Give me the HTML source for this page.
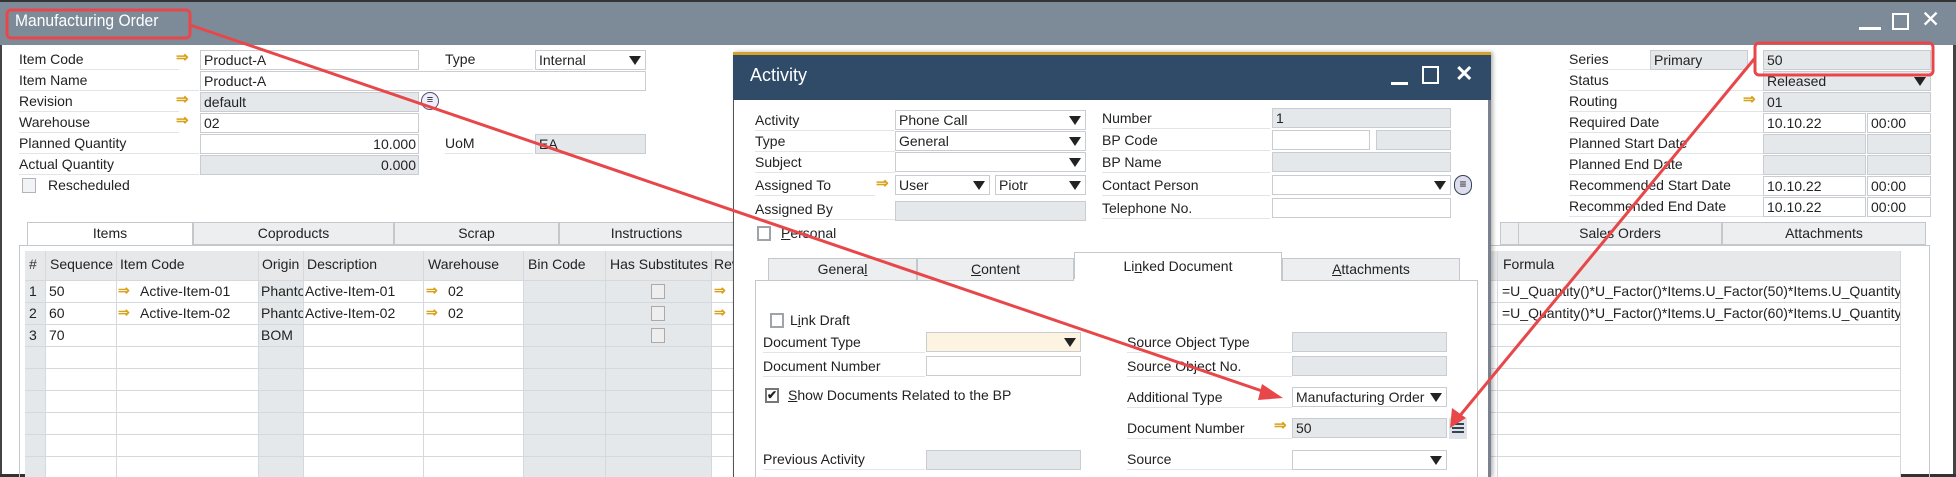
<!DOCTYPE html>
<html><head><meta charset="utf-8"><style>
*{box-sizing:border-box;margin:0;padding:0}
body{width:1956px;height:477px;overflow:hidden;background:#fff;position:relative;font-family:"Liberation Sans Narrow","Liberation Sans",sans-serif;font-size:14px;color:#222}
.a{position:absolute;white-space:nowrap}
.l{position:absolute;white-space:nowrap;line-height:20px;border-bottom:1px solid #e2e4e6;height:21px}
.f{position:absolute;height:20px;border:1px solid #c9cdd1;background:#fff;line-height:18px;padding-left:3px;white-space:nowrap;overflow:hidden}
.g{background:#e5e8eb}
.dd:after{content:"";position:absolute;right:4px;top:5px;border-left:6px solid transparent;border-right:6px solid transparent;border-top:9px solid #222}
.ar{position:absolute;color:#d9a21b;font-size:15px;font-weight:bold;line-height:20px}
.r{font-family:"Liberation Sans",sans-serif;font-size:14px}
.tab{position:absolute;height:23px;border:1px solid #c4c8cc;background:#eceef0;text-align:center;line-height:21px}
.cb{position:absolute;width:14px;height:15px;border:2px solid #a0a4a8;background:#fff}
.gl{position:absolute;height:1px;background:#d6d9dc}
.gv{position:absolute;width:1px;background:#d6d9dc}
</style></head><body>
<div class="a" style="left:0;top:0;width:1956px;height:45px;background:#7d8b99;border-top:2px solid #333"></div>
<div class="a" style="left:15px;top:11px;font-size:17px;color:#fff;transform:scaleX(0.92);transform-origin:left">Manufacturing Order</div>
<div class="a" style="left:1859px;top:27px;width:22px;height:3px;background:#fff"></div>
<div class="a" style="left:1892px;top:13px;width:17px;height:17px;border:2.5px solid #fff"></div>
<div class="a" style="left:1921px;top:6px;color:#fff;font-size:23px;font-family:'Liberation Sans',sans-serif">✕</div>
<div class="a" style="left:0;top:45px;width:2px;height:432px;background:#444"></div>
<div class="a" style="left:1953px;top:45px;width:3px;height:432px;background:#444"></div>
<div class="a" style="left:0;top:474px;width:1956px;height:3px;background:#333"></div>

<div class="l" style="left:19px;top:49px;width:160px">Item Code</div>
<div class="ar" style="left:176px;top:48px">⇒</div>
<div class="f" style="left:200px;top:50px;width:219px">Product-A</div>
<div class="l" style="left:445px;top:49px;width:88px">Type</div>
<div class="f dd" style="left:535px;top:50px;width:111px">Internal</div>
<div class="l" style="left:19px;top:70px;width:180px">Item Name</div>
<div class="f" style="left:200px;top:71px;width:446px">Product-A</div>
<div class="l" style="left:19px;top:91px;width:160px">Revision</div>
<div class="ar" style="left:176px;top:90px">⇒</div>
<div class="f g" style="left:200px;top:92px;width:219px">default</div>
<div class="a" style="left:421px;top:92px;width:18px;height:18px;border-radius:9px;border:1.5px solid #556;background:#eef;font-size:11px;text-align:center;line-height:15px">≡</div>
<div class="l" style="left:19px;top:112px;width:160px">Warehouse</div>
<div class="ar" style="left:176px;top:111px">⇒</div>
<div class="f" style="left:200px;top:113px;width:219px">02</div>
<div class="l" style="left:19px;top:133px;width:180px">Planned Quantity</div>
<div class="f" style="left:200px;top:134px;width:219px;text-align:right;padding-right:2px">10.000</div>
<div class="l" style="left:445px;top:133px;width:88px">UoM</div>
<div class="f g" style="left:535px;top:134px;width:111px">EA</div>
<div class="l" style="left:19px;top:154px;width:180px">Actual Quantity</div>
<div class="f g" style="left:200px;top:155px;width:219px;text-align:right;padding-right:2px">0.000</div>
<div class="cb" style="left:22px;top:178px;border-width:1px;border-color:#b0b4b8;background:#f2f3f4"></div>
<div class="a" style="left:48px;top:177px">Rescheduled</div>

<div class="tab" style="left:27px;top:222px;width:166px;background:#fff;border-bottom-color:#fff;height:24px">Items</div>
<div class="tab" style="left:193px;top:222px;width:201px">Coproducts</div>
<div class="tab" style="left:394px;top:222px;width:165px">Scrap</div>
<div class="tab" style="left:559px;top:222px;width:175px">Instructions</div>
<div class="tab r" style="left:1500px;top:222px;width:40px"></div>
<div class="tab r" style="left:1518px;top:222px;width:204px">Sales Orders</div>
<div class="tab r" style="left:1722px;top:222px;width:204px">Attachments</div>
<div class="a" style="left:19px;top:245px;width:1911px;height:232px;border:1px solid #c4c8cc;border-bottom:none"></div>

<div class="a" style="left:25px;top:251px;width:1875px;height:226px;background:#fff;border-left:1px solid #d6d9dc"></div>
<div class="a g" style="left:25px;top:251px;width:1875px;height:29px;background:#e6e8ea"></div>
<div class="a g" style="left:25px;top:280px;width:20px;height:197px"></div>
<div class="a g" style="left:258px;top:280px;width:45px;height:197px"></div>
<div class="a g" style="left:523px;top:280px;width:188px;height:197px"></div>
<div class="gv" style="left:45px;top:251px;height:226px"></div>
<div class="gv" style="left:116px;top:251px;height:226px"></div>
<div class="gv" style="left:258px;top:251px;height:226px"></div>
<div class="gv" style="left:303px;top:251px;height:226px"></div>
<div class="gv" style="left:423px;top:251px;height:226px"></div>
<div class="gv" style="left:523px;top:251px;height:226px"></div>
<div class="gv" style="left:605px;top:251px;height:226px"></div>
<div class="gv" style="left:711px;top:251px;height:226px"></div>
<div class="gv" style="left:1497px;top:251px;height:226px"></div>
<div class="gv" style="left:1900px;top:251px;height:226px"></div>
<div class="gl" style="left:25px;top:280px;width:1875px"></div>
<div class="gl" style="left:25px;top:302px;width:1875px"></div>
<div class="gl" style="left:25px;top:324px;width:1875px"></div>
<div class="gl" style="left:25px;top:346px;width:1875px"></div>
<div class="gl" style="left:25px;top:368px;width:1875px"></div>
<div class="gl" style="left:25px;top:390px;width:1875px"></div>
<div class="gl" style="left:25px;top:412px;width:1875px"></div>
<div class="gl" style="left:25px;top:434px;width:1875px"></div>
<div class="gl" style="left:25px;top:456px;width:1875px"></div>
<div class="a" style="left:29px;top:256px;color:#333">#</div>
<div class="a" style="left:50px;top:256px">Sequence</div>
<div class="a" style="left:120px;top:256px">Item Code</div>
<div class="a" style="left:262px;top:256px">Origin</div>
<div class="a" style="left:307px;top:256px">Description</div>
<div class="a" style="left:428px;top:256px">Warehouse</div>
<div class="a" style="left:528px;top:256px">Bin Code</div>
<div class="a" style="left:610px;top:256px">Has Substitutes</div>
<div class="a" style="left:714px;top:256px">Rev</div>
<div class="a r" style="left:1503px;top:256px">Formula</div>
<div class="a" style="left:29px;top:283px">1</div><div class="a" style="left:49px;top:283px">50</div>
<div class="a" style="left:118px;top:282px;color:#d9a21b;font-weight:bold">⇒</div><div class="a" style="left:140px;top:283px">Active-Item-01</div>
<div class="a" style="left:261px;top:283px;width:42px;overflow:hidden">Phantom</div><div class="a" style="left:305px;top:283px">Active-Item-01</div>
<div class="a" style="left:426px;top:282px;color:#d9a21b;font-weight:bold">⇒</div><div class="a" style="left:448px;top:283px">02</div>
<div class="cb" style="left:651px;top:284px;border-width:1px;border-color:#aaa;background:#eee"></div>
<div class="a" style="left:714px;top:282px;color:#d9a21b;font-weight:bold">⇒</div>
<div class="a" style="left:29px;top:305px">2</div><div class="a" style="left:49px;top:305px">60</div>
<div class="a" style="left:118px;top:304px;color:#d9a21b;font-weight:bold">⇒</div><div class="a" style="left:140px;top:305px">Active-Item-02</div>
<div class="a" style="left:261px;top:305px;width:42px;overflow:hidden">Phantom</div><div class="a" style="left:305px;top:305px">Active-Item-02</div>
<div class="a" style="left:426px;top:304px;color:#d9a21b;font-weight:bold">⇒</div><div class="a" style="left:448px;top:305px">02</div>
<div class="cb" style="left:651px;top:306px;border-width:1px;border-color:#aaa;background:#eee"></div>
<div class="a" style="left:714px;top:304px;color:#d9a21b;font-weight:bold">⇒</div>
<div class="a" style="left:29px;top:327px">3</div><div class="a" style="left:49px;top:327px">70</div>
<div class="a" style="left:261px;top:327px">BOM</div>
<div class="cb" style="left:651px;top:328px;border-width:1px;border-color:#aaa;background:#eee"></div>
<div class="a r" style="left:1502px;top:283px;width:398px;overflow:hidden">=U_Quantity()*U_Factor()*Items.U_Factor(50)*Items.U_Quantity</div>
<div class="a r" style="left:1502px;top:305px;width:398px;overflow:hidden">=U_Quantity()*U_Factor()*Items.U_Factor(60)*Items.U_Quantity</div>

<div class="l r" style="left:1569px;top:49px;width:178px">Series</div>
<div class="f r g" style="left:1650px;top:50px;width:98px">Primary</div>
<div class="f r g" style="left:1763px;top:50px;width:168px">50</div>
<div class="l r" style="left:1569px;top:70px;width:194px">Status</div>
<div class="f r g dd" style="left:1763px;top:71px;width:168px">Released</div>
<div class="l r" style="left:1569px;top:91px;width:194px">Routing</div>
<div class="ar" style="left:1743px;top:90px">⇒</div>
<div class="f r g" style="left:1763px;top:92px;width:168px">01</div>
<div class="l r" style="left:1569px;top:112px;width:194px">Required Date</div>
<div class="f r" style="left:1763px;top:113px;width:103px">10.10.22</div><div class="f r" style="left:1867px;top:113px;width:64px">00:00</div>
<div class="l r" style="left:1569px;top:133px;width:194px">Planned Start Date</div>
<div class="f g" style="left:1763px;top:134px;width:103px"></div><div class="f g" style="left:1867px;top:134px;width:64px"></div>
<div class="l r" style="left:1569px;top:154px;width:194px">Planned End Date</div>
<div class="f g" style="left:1763px;top:155px;width:103px"></div><div class="f g" style="left:1867px;top:155px;width:64px"></div>
<div class="l r" style="left:1569px;top:175px;width:194px">Recommended Start Date</div>
<div class="f r" style="left:1763px;top:176px;width:103px">10.10.22</div><div class="f r" style="left:1867px;top:176px;width:64px">00:00</div>
<div class="l r" style="left:1569px;top:196px;width:194px">Recommended End Date</div>
<div class="f r" style="left:1763px;top:197px;width:103px">10.10.22</div><div class="f r" style="left:1867px;top:197px;width:64px">00:00</div>

<div class="a" style="left:733px;top:52px;width:758px;height:425px;background:#fff;border-left:1px solid #555;border-right:3px solid #7a8290;box-shadow:2px 0 4px rgba(0,0,0,.3)"></div>
<div class="a" style="left:733px;top:52px;width:758px;height:48px;background:#2f4b68;border-top:3px solid #d4a22a"></div>
<div class="a" style="left:750px;top:65px;font-size:18px;color:#fff">Activity</div>
<div class="a" style="left:1391px;top:82px;width:17px;height:3px;background:#fff"></div>
<div class="a" style="left:1422px;top:66px;width:17px;height:18px;border:2.5px solid #fff"></div>
<div class="a" style="left:1455px;top:61px;color:#fff;font-size:22px;font-weight:bold;font-family:'Liberation Sans',sans-serif">✕</div>

<div class="l" style="left:755px;top:110px;width:140px">Activity</div>
<div class="f dd" style="left:895px;top:110px;width:191px">Phone Call</div>
<div class="l" style="left:755px;top:131px;width:140px">Type</div>
<div class="f dd" style="left:895px;top:131px;width:191px">General</div>
<div class="l" style="left:755px;top:152px;width:140px">Subject</div>
<div class="f dd" style="left:895px;top:152px;width:191px"></div>
<div class="l" style="left:755px;top:175px;width:120px">Assigned To</div>
<div class="ar" style="left:876px;top:174px">⇒</div>
<div class="f dd" style="left:895px;top:175px;width:95px">User</div>
<div class="f dd" style="left:995px;top:175px;width:91px">Piotr</div>
<div class="l" style="left:755px;top:199px;width:140px">Assigned By</div>
<div class="f g" style="left:895px;top:201px;width:191px"></div>
<div class="cb" style="left:757px;top:226px"></div>
<div class="a" style="left:781px;top:225px"><u>P</u>ersonal</div>

<div class="l" style="left:1102px;top:108px;width:168px">Number</div>
<div class="f g" style="left:1272px;top:108px;width:179px">1</div>
<div class="l" style="left:1102px;top:130px;width:168px">BP Code</div>
<div class="f" style="left:1272px;top:130px;width:98px"></div>
<div class="f g" style="left:1376px;top:130px;width:75px"></div>
<div class="l" style="left:1102px;top:152px;width:168px">BP Name</div>
<div class="f g" style="left:1272px;top:152px;width:179px"></div>
<div class="l" style="left:1102px;top:175px;width:168px">Contact Person</div>
<div class="f dd" style="left:1272px;top:175px;width:179px"></div>
<div class="a" style="left:1454px;top:175px;width:18px;height:20px;border-radius:9px;border:1.5px solid #345;background:#dde;font-size:12px;text-align:center;line-height:17px">≡</div>
<div class="l" style="left:1102px;top:198px;width:168px">Telephone No.</div>
<div class="f" style="left:1272px;top:198px;width:179px"></div>

<div class="tab" style="left:768px;top:258px;width:149px">Genera<u>l</u></div>
<div class="tab" style="left:917px;top:258px;width:157px"><u>C</u>ontent</div>
<div class="tab" style="left:1074px;top:252px;width:208px;height:29px;background:#fff;border-bottom-color:#fff;line-height:27px">Li<u>n</u>ked Document</div>
<div class="tab" style="left:1282px;top:258px;width:178px"><u>A</u>ttachments</div>
<div class="a" style="left:755px;top:280px;width:723px;height:197px;border:1px solid #c4c8cc;border-bottom:none"></div>
<div class="a" style="left:1074px;top:279px;width:207px;height:3px;background:#fff"></div>

<div class="cb" style="left:770px;top:313px"></div>
<div class="a" style="left:790px;top:312px">L<u>i</u>nk Draft</div>
<div class="l" style="left:763px;top:332px;width:162px">Document Type</div>
<div class="f dd" style="left:926px;top:332px;width:155px;background:#fdf3e1"></div>
<div class="l" style="left:763px;top:356px;width:162px">Document Number</div>
<div class="f" style="left:926px;top:356px;width:155px"></div>
<div class="cb" style="left:765px;top:388px;border-color:#777;font-size:12px;line-height:11px;text-align:center;font-weight:bold">✔</div>
<div class="a" style="left:788px;top:387px"><u>S</u>how Documents Related to the BP</div>
<div class="l" style="left:763px;top:449px;width:162px">Previous Activity</div>
<div class="f g" style="left:926px;top:450px;width:155px"></div>

<div class="l" style="left:1127px;top:332px;width:165px">Source Object Type</div>
<div class="f g" style="left:1292px;top:332px;width:155px"></div>
<div class="l" style="left:1127px;top:356px;width:165px">Source Object No.</div>
<div class="f g" style="left:1292px;top:356px;width:155px"></div>
<div class="l" style="left:1127px;top:387px;width:165px">Additional Type</div>
<div class="f dd" style="left:1292px;top:387px;width:155px">Manufacturing Order</div>
<div class="l" style="left:1127px;top:418px;width:165px">Document Number</div>
<div class="ar" style="left:1274px;top:416px">⇒</div>
<div class="f g" style="left:1292px;top:418px;width:155px">50</div>
<div class="a" style="left:1449px;top:418px;width:18px;height:21px;background:#dfe3e8"></div>
<div class="a" style="left:1452px;top:423px;width:12px;height:2px;background:#345;box-shadow:0 4px 0 #345,0 8px 0 #345"></div>
<div class="l" style="left:1127px;top:449px;width:165px">Source</div>
<div class="f dd" style="left:1292px;top:450px;width:155px"></div>

<svg class="a" style="left:0;top:0" width="1956" height="477">
<rect x="7" y="10" width="183" height="28" rx="4" fill="none" stroke="#e8474a" stroke-width="3"/>
<rect x="1755" y="43" width="178" height="32" rx="4" fill="none" stroke="#e8474a" stroke-width="3"/>
<line x1="190" y1="25" x2="1268" y2="393" stroke="#e8474a" stroke-width="3"/>
<polygon points="1283,398 1262,384 1258,400" fill="#e8474a"/>
<line x1="1755" y1="58" x2="1458" y2="418" stroke="#e8474a" stroke-width="3"/>
<polygon points="1450,428 1452,408 1466,418" fill="#e8474a"/>
</svg>
</body></html>
